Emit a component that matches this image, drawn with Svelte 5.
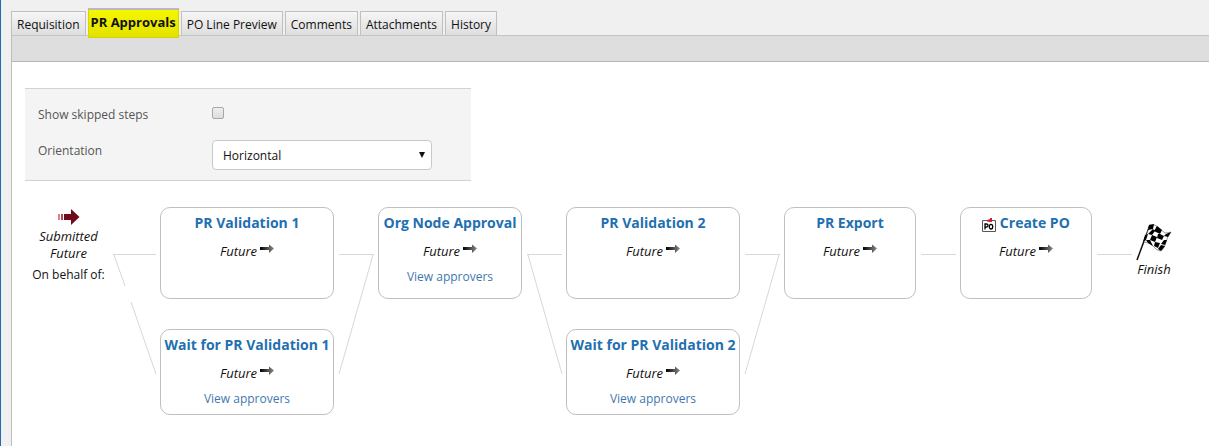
<script>
    const tabs = ['Requisition', 'PR Approvals', 'PO Line Preview', 'Comments', 'Attachments', 'History'];
    const orientations = ['Horizontal', 'Vertical'];

    let active = $state('PR Approvals');
    let showSkipped = $state(false);
    let orientation = $state('Horizontal');

    // each stage is a column, its steps run in parallel; link = connector drawn after it
    const stages = [
        {
            wide: true,
            link: 'merge',
            steps: [
                { title: 'PR Validation 1' },
                { title: 'Wait for PR Validation 1', approvers: true },
            ],
        },
        { mid: true, link: 'split', steps: [{ title: 'Org Node Approval', approvers: true }] },
        {
            wide: true,
            link: 'merge',
            steps: [
                { title: 'PR Validation 2' },
                { title: 'Wait for PR Validation 2', approvers: true },
            ],
        },
        { link: 'line', steps: [{ title: 'PR Export' }] },
        { link: 'line', steps: [{ title: 'Create PO', po: true }] },
    ];

    const links = {
        line: 'M5 47.5H40',
        split: 'M5 47.5H40M6 48L40 167',
        merge: 'M5 47.5H40M39 48L5 167',
    };
</script>

{#snippet stepArrow()}
    <svg class="step-arrow" width="14" height="12" viewBox="0 0 14 12" aria-hidden="true">
        <defs>
            <linearGradient id="fade" x1="0" x2="1">
                <stop offset="0" stop-color="#000" />
                <stop offset="0.6" stop-color="#555" />
                <stop offset="1" stop-color="#888" />
            </linearGradient>
        </defs>
        <path d="M0 4H9V1.500L14 5.500L9 10V7H0z" fill="url(#fade)" />
    </svg>
{/snippet}

<div class="page">
    <nav class="tabs">
        {#each tabs as tab}
            <button class="tab" class:active={active === tab} onclick={() => (active = tab)}>{tab}</button>
        {/each}
    </nav>

    <main class="panel">
        <div class="toolbar"></div>

        <div class="content">
            <div class="options">
                <label for="skipped">Show skipped steps</label>
                <input id="skipped" type="checkbox" bind:checked={showSkipped} />
                <label for="orientation">Orientation</label>
                <div class="select">
                    <select id="orientation" bind:value={orientation}>
                        {#each orientations as o}
                            <option>{o}</option>
                        {/each}
                    </select>
                    <svg width="8" height="7" viewBox="0 0 8 7" aria-hidden="true"><path d="M1 0H7L4 6z" fill="#111" /></svg>
                </div>
            </div>

            <div class="flow">
                <div class="start">
                    <svg width="22" height="18" viewBox="0 0 22 18" aria-hidden="true">
                        <path d="M0 6h2v6H0z" fill="#e0808c" />
                        <path d="M3 6h2v6H3z" fill="#b04858" />
                        <path d="M6 6H13V1L21.500 9L13 17V12H6z" fill="#6e0c1c" />
                    </svg>
                    <em>Submitted</em>
                    <em>Future</em>
                    <span>On behalf of:</span>
                </div>
                <svg class="link" width="48" height="208" viewBox="0 0 48 208" aria-hidden="true">
                    <path d="M1 47.500H44M2 48L13 79M19 95L44 167" />
                </svg>

                {#each stages as stage}
                    <div class="stage" class:wide={stage.wide} class:mid={stage.mid}>
                        {#each stage.steps as step}
                            <section class="step">
                                <h3>
                                    {#if step.po}
                                        <svg width="14" height="14" viewBox="0 0 14 14" aria-hidden="true">
                                            <path d="M.5 2.500H13.500V13.500H.5z" fill="#fff" stroke="#555" />
                                            <path d="M3 11.500V6H4.500Q6 6 6 7.500T4.500 9H3" fill="none" stroke="#000" stroke-width="1.300" />
                                            <ellipse cx="9" cy="8.700" rx="1.700" ry="2.300" fill="none" stroke="#000" stroke-width="1.300" />
                                            <path d="M5 2L8 1V0H10V4H8L5 3.500z" fill="#d02030" />
                                        </svg>
                                    {/if}
                                    {step.title}
                                </h3>
                                <p class="status"><em>Future</em>{@render stepArrow()}</p>
                                {#if step.approvers}
                                    <a href="#approvers">View approvers</a>
                                {/if}
                            </section>
                        {/each}
                    </div>
                    <svg class="link" width="44" height="208" viewBox="0 0 44 208" aria-hidden="true">
                        <path d={links[stage.link]} />
                    </svg>
                {/each}

                <div class="finish">
                    <svg width="36" height="38" viewBox="0 0 36 38" aria-hidden="true">
                        <path d="M14 2L1 37" stroke="#111" stroke-width="1.500" />
                        <path d="M14 2Q19 1 22 4T29 10Q32 10 35 9Q31 14 30 19Q28 27 24 28Q20 27 17 23Q13 19 8 19z" fill="#fff" stroke="#555" stroke-width=".6" />
                        <path
                            d="M13 2L18 1L17 6L12 7zM21 3L26 7L24 11L18 8zM17 6L19 8L16 12L12 11zM12 11L10 17L7 19L9 12zM24 11L28 13L26 17L21 15L22 11zM30 11L35 9L32 14L28 13zM16 12L21 14L19 19L14 17zM28 17L31 17L29 22L25 21zM19 19L24 20L22 25L18 23zM25 22L29 23L25 28L22 26zM10 17L14 17L17 23L12 20z"
                            fill="#000"
                        />
                    </svg>
                    <em>Finish</em>
                </div>
            </div>
        </div>
    </main>
</div>

<style>
    :global(body) { margin: 0; background: #f0f0f0; }

    .page {
        box-sizing: border-box;
        display: flex;
        flex-direction: column;
        min-height: 100vh;
        padding: 8px 0 0 10px;
        border-left: 1px solid #1f6cb0;
        font-family: "Open Sans", "Noto Sans", sans-serif;
        font-size: 12px;
        line-height: 20px;
        color: #111;
    }

    .tabs {
        display: flex;
        align-items: flex-end;
        gap: 2px;
        height: 27px;
    }

    .tab {
        height: 24px;
        padding: 2px 5px 0;
        border: 1px solid #c0c0c0;
        border-bottom: none;
        background: linear-gradient(#f6f6f6, #dedede);
        font: inherit;
        color: #111;
        white-space: nowrap;
        cursor: pointer;
    }

    .tab.active {
        z-index: 1;
        height: 30px;
        margin-bottom: -3px;
        padding: 0 2px 4px;
        border: 1px solid #d4d400;
        border-top: 2px solid #b8b8c8;
        background: linear-gradient(#f6f600, #e2e200);
        font-size: 13px;
        font-weight: bold;
    }

    .panel {
        flex: 1;
        border-left: 1px solid #bdbdbd;
        background: #fff;
    }

    .toolbar {
        height: 25px;
        border-top: 1px solid #c4c4c4;
        border-bottom: 1px solid #b8b8b8;
        background: #dedede;
    }

    .content { padding: 26px 13px; }

    .options {
        box-sizing: border-box;
        display: grid;
        grid-template-columns: 174px 220px;
        row-gap: 15px;
        max-width: 446px;
        padding: 15px 13px 10px;
        border: 1px solid #d2d2d2;
        border-width: 1px 0;
        background: #f4f4f4;
        color: #555;
    }

    .options label { padding-top: 1px; }

    .options input {
        appearance: none;
        width: 12px;
        height: 12px;
        margin: 3px 0;
        border: 1px solid #a8a8a8;
        border-radius: 2px;
        background: linear-gradient(#eee, #ddd);
    }
    .options input:checked { background: #1f6cb0; }

    .select { position: relative; }

    .select select {
        display: block;
        appearance: none;
        width: 100%;
        height: 30px;
        padding: 2px 10px 0;
        border: 1px solid #c8c8c8;
        border-radius: 4px;
        background: #fff;
        font: inherit;
        color: #111;
    }

    .select svg {
        position: absolute;
        top: 12px;
        right: 6px;
        pointer-events: none;
    }

    .flow {
        display: flex;
        align-items: flex-start;
        padding-top: 26px;
    }

    em { font-size: 13px; }

    .start, .finish {
        display: flex;
        flex-direction: column;
        align-items: center;
        flex: none;
        line-height: 17px;
        white-space: nowrap;
    }
    .start { width: 87px; }
    .start svg { margin: 1px 0 2px; }
    .start span { margin-top: 4px; }
    .finish { padding-top: 16px; }

    .link { flex: none; }
    .link path { fill: none; stroke: #d8d8d8; }

    .stage {
        display: flex;
        flex-direction: column;
        gap: 30px;
        flex: none;
        width: 132px;
    }
    .stage.mid { width: 144px; }
    .stage.wide { width: 174px; }

    .step {
        box-sizing: border-box;
        padding: 5px 0;
        border: 1px solid #c0c0c0;
        border-radius: 10px;
        text-align: center;
        white-space: nowrap;
    }
    .step:first-child { min-height: 92px; }

    h3 {
        margin: 0;
        font-size: 14px;
        line-height: 20px;
        color: #1f70b0;
    }
    h3 svg { vertical-align: -4px; }

    .status { height: 20px; margin: 8px 0 6px; }
    .step-arrow { margin-left: 3px; vertical-align: 1px; }

    a { color: #3f78b0; text-decoration: none; }
    a:hover { text-decoration: underline; }
</style>
